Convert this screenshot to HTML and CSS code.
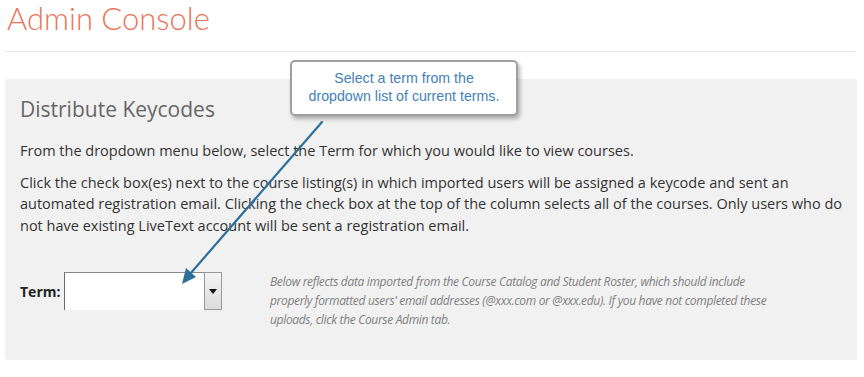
FILE: index.html
```html
<!DOCTYPE html>
<html lang="en">
<head>
  <meta charset="UTF-8" />
  <title>Admin Console</title>
  <link rel="stylesheet" href="styles.css">
</head>
<body>
  <div class="header">
    <h1 class="title">Admin Console</h1>
  </div>

  <div class="panel">
    <h2 class="panel-title">Distribute Keycodes</h2>
    <p class="intro">From the dropdown menu below, select the Term for which you would like to view courses.</p>
    <p class="intro">Click the check box(es) next to the course listing(s) in which imported users will be assigned a keycode and sent an automated registration email. Clicking the check box at the top of the column selects all of the courses. Only users who do not have existing LiveText account will be sent a registration email.</p>

    <div class="term-row">
      <div class="term-field">
        <label class="term-label">Term:</label>
        <div class="select">
          <div class="select-value"></div>
          <div class="select-button"><span class="caret"></span></div>
        </div>
      </div>
      <p class="note">Below reflects data imported from the Course Catalog and Student Roster, which should include properly formatted users' email addresses (@xxx.com or @xxx.edu). If you have not completed these uploads, click the Course Admin tab.</p>
    </div>
  </div>

  <!-- tutorial callout over the page -->
  <div class="callout">Select a term from the<br>dropdown list of current terms.</div>
  <svg class="arrow" width="864" height="377" viewBox="0 0 864 377">
    <line x1="322" y1="122" x2="190" y2="274" stroke="#2c6f99" stroke-width="2.2" stroke-linecap="round"/>
    <polygon points="182,284 186,268 196,277" fill="#2c6f99"/>
  </svg>
</body>
</html>
```

FILE: styles.css
```css
body {
  margin: 0;
  padding: 0;
  background-color: #fff;
  color: #333;
  font-family: 'Open Sans', sans-serif;
  position: relative;
  width: 864px;
  height: 377px;
  overflow: hidden;
}

.header {
  margin: 0 9px 0 5px;
  height: 52px;
  border-bottom: 1px solid #e2e2e2;
  box-sizing: border-box;
}

.title {
  margin: 0;
  padding: 0 0 0 2px;
  font-family: 'Lato', sans-serif;
  font-weight: 300;
  font-size: 31px;
  line-height: 37px;
  color: #ea7458;
}

.panel {
  margin: 27px 7px 0 5px;
  height: 281px;
  box-sizing: border-box;
  padding: 16px 15px 0 15px;
  background-color: #f1f1f1;
  border-radius: 3px;
}

.panel-title {
  margin: 0 0 17px 0;
  font-weight: 400;
  font-size: 21px;
  line-height: 28px;
  color: #666;
}

.intro {
  margin: 0 0 10px 0;
  font-size: 14.5px;
  line-height: 21.5px;
  color: #333;
}

.term-row {
  display: flex;
  align-items: flex-start;
  margin-top: 36px;
}

.term-field {
  display: flex;
  align-items: center;
  width: 250px;
  flex-shrink: 0;
}

.term-label {
  font-weight: 700;
  font-size: 14px;
  color: #222;
  margin-right: 4px;
}

.select {
  display: flex;
  width: 158px;
  height: 38px;
  background: #fff;
  border-top: 1px solid #8a8a8a;
  border-left: 1px solid #6a6a6a;
  box-sizing: border-box;
}

.select-value {
  flex: 1;
}

.select-button {
  width: 18px;
  height: 38px;
  margin-top: -1px;
  box-sizing: border-box;
  border: 1px solid #9a9a9a;
  background: linear-gradient(#f4f4f4, #dcdcdc);
  display: flex;
  align-items: center;
  justify-content: center;
}

.caret {
  width: 0;
  height: 0;
  border-left: 4px solid transparent;
  border-right: 4px solid transparent;
  border-top: 5px solid #111;
}

.note {
  margin: 0;
  width: 515px;
  font-style: italic;
  font-size: 12px;
  letter-spacing: -0.33px;
  line-height: 19px;
  color: #808080;
}

.callout {
  position: absolute;
  left: 290px;
  top: 60px;
  width: 228px;
  height: 56px;
  box-sizing: border-box;
  padding-top: 7px;
  background: #fff;
  border: 2px solid #a0a0a0;
  border-radius: 5px;
  box-shadow: 2px 3px 4px rgba(0, 0, 0, 0.3);
  font-family: 'Liberation Sans', Arial, sans-serif;
  font-size: 14.2px;
  line-height: 18px;
  text-align: center;
  color: #4381b6;
}

.arrow {
  position: absolute;
  left: 0;
  top: 0;
  pointer-events: none;
}
```
